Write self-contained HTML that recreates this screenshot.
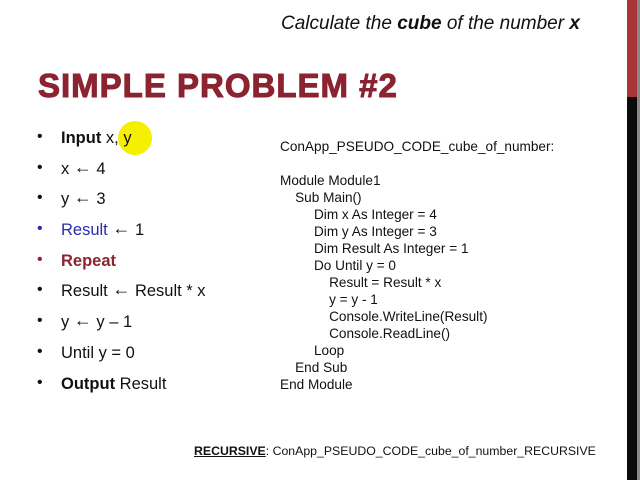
<!DOCTYPE html>
<html><head><style>
body{margin:0;width:640px;height:480px;background:#fff;position:relative;overflow:hidden;font-family:"Liberation Sans",Arial,sans-serif;color:#111}
.a{position:absolute;white-space:nowrap}
.t{font-size:33px;font-weight:bold;color:#8b2330;left:38px;top:67px;letter-spacing:1px;-webkit-text-stroke:1px #8b2330}
.b{font-size:16.5px;left:61px}
.r{font-size:18px;line-height:14px;vertical-align:1px}
.d{position:absolute;left:37px;font-size:16px}
.c{font-size:13.6px;left:280px}
</style></head><body>
<div class="a" style="left:281px;top:13px;font-size:19px;font-style:italic">Calculate the <b>cube</b> of the number <b>x</b></div>
<div class="a t">SIMPLE PROBLEM #2</div>
<div class="a" style="left:118px;top:121px;width:34px;height:34px;border-radius:50%;background:#f5f000"></div>
<div class="d" style="top:128px">•</div><div class="a b" style="top:129px"><b>Input</b> x, y</div>
<div class="d" style="top:159px">•</div><div class="a b" style="top:160px">x <span class="r">←</span> 4</div>
<div class="d" style="top:189px">•</div><div class="a b" style="top:190px">y <span class="r">←</span> 3</div>
<div class="d" style="top:220px;color:#2a2ab0">•</div><div class="a b" style="top:221px"><span style="color:#2a2ab0">Result</span> <span class="r">←</span> 1</div>
<div class="d" style="top:251px;color:#8b2330">•</div><div class="a b" style="top:252px;color:#8b2330;font-weight:bold">Repeat</div>
<div class="d" style="top:281px">•</div><div class="a b" style="top:282px">Result <span class="r">←</span> Result * x</div>
<div class="d" style="top:312px">•</div><div class="a b" style="top:313px">y <span class="r">←</span> y – 1</div>
<div class="d" style="top:343px">•</div><div class="a b" style="top:344px">Until y = 0</div>
<div class="d" style="top:374px">•</div><div class="a b" style="top:375px"><b>Output</b> Result</div>
<div class="a c" style="top:139px">ConApp_PSEUDO_CODE_cube_of_number:</div>
<div class="a c" style="top:172px;line-height:17px">Module Module1<br>&nbsp;&nbsp;&nbsp;&nbsp;Sub Main()<br>&nbsp;&nbsp;&nbsp;&nbsp;&nbsp;&nbsp;&nbsp;&nbsp;&nbsp;Dim x As Integer = 4<br>&nbsp;&nbsp;&nbsp;&nbsp;&nbsp;&nbsp;&nbsp;&nbsp;&nbsp;Dim y As Integer = 3<br>&nbsp;&nbsp;&nbsp;&nbsp;&nbsp;&nbsp;&nbsp;&nbsp;&nbsp;Dim Result As Integer = 1<br>&nbsp;&nbsp;&nbsp;&nbsp;&nbsp;&nbsp;&nbsp;&nbsp;&nbsp;Do Until y = 0<br>&nbsp;&nbsp;&nbsp;&nbsp;&nbsp;&nbsp;&nbsp;&nbsp;&nbsp;&nbsp;&nbsp;&nbsp;&nbsp;Result = Result * x<br>&nbsp;&nbsp;&nbsp;&nbsp;&nbsp;&nbsp;&nbsp;&nbsp;&nbsp;&nbsp;&nbsp;&nbsp;&nbsp;y = y - 1<br>&nbsp;&nbsp;&nbsp;&nbsp;&nbsp;&nbsp;&nbsp;&nbsp;&nbsp;&nbsp;&nbsp;&nbsp;&nbsp;Console.WriteLine(Result)<br>&nbsp;&nbsp;&nbsp;&nbsp;&nbsp;&nbsp;&nbsp;&nbsp;&nbsp;&nbsp;&nbsp;&nbsp;&nbsp;Console.ReadLine()<br>&nbsp;&nbsp;&nbsp;&nbsp;&nbsp;&nbsp;&nbsp;&nbsp;&nbsp;Loop<br>&nbsp;&nbsp;&nbsp;&nbsp;End Sub<br>End Module</div>
<div class="a" style="left:194px;top:444px;font-size:12.3px"><b><u>RECURSIVE</u></b>: ConApp_PSEUDO_CODE_cube_of_number_RECURSIVE</div>
<div class="a" style="left:627px;top:0;width:10px;height:480px;background:#0a0a0a"></div>
<div class="a" style="left:627px;top:0;width:10px;height:97px;background:#a8343a"></div>
<div class="a" style="left:637px;top:0;width:3px;height:480px;background:#888"></div>
</body></html>
